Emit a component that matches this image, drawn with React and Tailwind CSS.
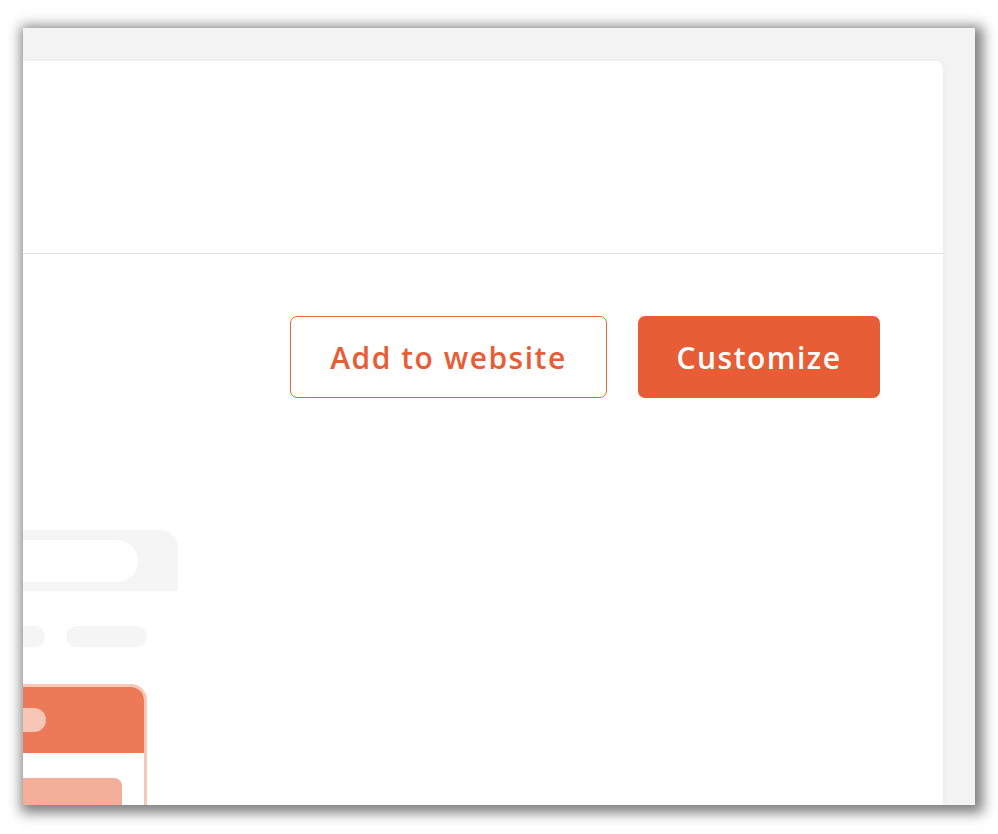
const Buttons = () => (
  <div className="flex justify-end gap-[31px] pr-[63px] pt-[62px]">
    <button className="h-[82px] w-[317px] rounded-[7px] border border-[#e9673f] bg-white pt-[1px] text-[30px] font-semibold tracking-[1.5px] text-[#e75d35]">
      Add to website
    </button>
    <button className="h-[82px] w-[242px] rounded-[7px] bg-[#e75d35] pt-[1px] text-[30px] font-semibold tracking-[1.5px] text-white">
      Customize
    </button>
  </div>
);

// the little widget preview that is cut off by the left edge
const Preview = () => (
  <div className="mt-[132px] flex flex-col">
    <div className="h-[61px] w-[155px] rounded-tr-[18px] bg-[#f5f5f5] pt-[10px]">
      <div className="h-[42px] w-[115px] rounded-r-full bg-white" />
    </div>
    <div className="mt-[35px] flex gap-[21px]">
      <div className="h-[21px] w-[22px] rounded-r-full bg-[#f5f5f5]" />
      <div className="h-[21px] w-[81px] rounded-full bg-[#f5f5f5]" />
    </div>
    <div className="mt-[37px] h-[160px] w-[124px] overflow-hidden rounded-tr-[16px] border-t-[3px] border-r-[3px] border-[#f8c8b7]">
      <div className="h-[66px] bg-[#ec7a58] pt-[21px]">
        <div className="h-[24px] w-[23px] rounded-r-full bg-[#f6c6b5]" />
      </div>
      <div className="bg-white pt-[25px]">
        <div className="h-[40px] w-[99px] rounded-r-lg bg-[#f2ae98]" />
      </div>
    </div>
  </div>
);

export default function App() {
  return (
    <div
      className="h-[834px] w-full bg-white pl-[23px] pt-[28px]"
      style={{ fontFamily: '"Open Sans", "Liberation Sans", sans-serif' }}
    >
      <div className="h-[777px] w-[952px] overflow-hidden bg-[#f3f3f3] pt-[33px] shadow-[3px_3px_12px_5px_rgba(0,0,0,0.5)]">
        <div className="mr-[32px] h-[800px] rounded-tr-[8px] bg-white shadow-[1px_0_6px_rgba(0,0,0,0.04)]">
          <div className="h-[193px] border-b border-[#e0e0e0]" />
          <Buttons />
          <Preview />
        </div>
      </div>
    </div>
  );
}
